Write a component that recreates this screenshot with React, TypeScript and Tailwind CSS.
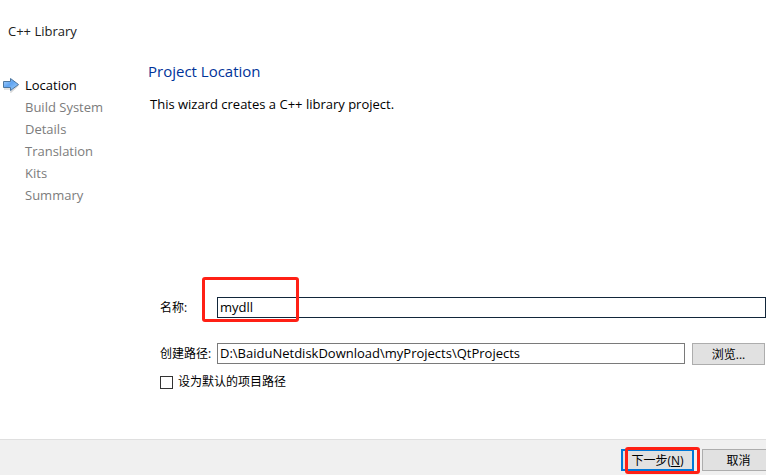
const steps = ["Location", "Build System", "Details", "Translation", "Kits", "Summary"];

function ArrowIcon() {
  return (
    <svg width="18" height="16" viewBox="0 0 18 16" aria-hidden="true">
      <defs>
        <linearGradient id="arrowFill" x1="0" y1="0" x2="1" y2="1">
          <stop offset="0" stopColor="#b5d8fb" />
          <stop offset="0.45" stopColor="#5fa4f2" />
          <stop offset="1" stopColor="#a5d2fb" />
        </linearGradient>
      </defs>
      <path d="M2 12h7v3l7.5-7" fill="none" stroke="#000" strokeOpacity="0.15" strokeWidth="1.5" />
      <path
        d="M1.5 4.5H8.5V1.5L16.5 7.5L8.5 13.5V10.5H1.5Z"
        fill="url(#arrowFill)"
        stroke="#4d769f"
        strokeWidth="1"
        strokeLinejoin="round"
      />
    </svg>
  );
}

export default function App() {
  return (
    <div className="flex min-h-screen flex-col overflow-hidden bg-white font-['Open_Sans','Noto_Sans_CJK_SC',sans-serif] text-[13px] leading-[22px] text-black">
      <header className="px-2 pt-5">
        <h1 className="text-[#202020]">C++ Library</h1>
      </header>

      <div className="flex flex-1 pt-[18px]">
        <nav className="w-[148px] shrink-0 pt-[14px]" aria-label="Steps">
          <ol>
            {steps.map((step, i) => (
              <li key={step} className="flex items-center">
                <span className="flex w-[25px] shrink-0 pl-0.5">{i === 0 && <ArrowIcon />}</span>
                <span className={i === 0 ? "text-black" : "text-[#7c7c7c]"}>{step}</span>
              </li>
            ))}
          </ol>
        </nav>

        <main className="min-w-0 flex-1">
          <h2 className="text-[15px] text-[#003399]">Project Location</h2>
          <p className="px-0.5 pt-[11px]">This wizard creates a C++ library project.</p>

          <form id="location" className="pt-[182px] pl-3 text-[12px]" onSubmit={(e) => e.preventDefault()}>
            <div className="flex items-start">
              <label htmlFor="name" className="w-[57px] shrink-0">名称:</label>
              <div className="relative min-w-0 flex-1">
                <input
                  id="name"
                  defaultValue="mydll"
                  className="block h-[21px] w-full border border-[#12263a] bg-white px-0.5 pb-0.5 text-[13px] leading-[18px] outline-none"
                />
                <span className="pointer-events-none absolute -top-5 -left-[15px] h-[45px] w-[97px] rounded-[3px] border-3 border-[#ff2015]" />
              </div>
            </div>

            <div className="flex items-start pt-6 pr-px">
              <label htmlFor="path" className="w-[57px] shrink-0 whitespace-nowrap">创建路径:</label>
              <input
                id="path"
                defaultValue="D:\BaiduNetdiskDownload\myProjects\QtProjects"
                className="block h-[21px] min-w-0 flex-1 border border-[#7a7a7a] bg-white px-0.5 pb-0.5 text-[13px] leading-[18px] outline-none"
              />
              <button type="button" className="ml-[7px] h-[22px] w-[73px] border border-[#adadad] bg-[#e1e1e1] pt-0.5 leading-[18px]">
                浏览...
              </button>
            </div>

            <label className="flex items-center gap-[5px] pt-[6px]">
              <input type="checkbox" className="size-[13px] appearance-none border border-[#333333] bg-white checked:bg-[#0078d7]" />
              设为默认的项目路径
            </label>
          </form>
        </main>
      </div>

      <footer className="flex h-9 items-start justify-end border-t border-[#dfdfdf] bg-[#f0f0f0] pt-[9px] text-[12px]">
        <div className="relative">
          <button type="submit" form="location" className="block h-[22px] w-[73px] border-2 border-[#0078d7] bg-[#e1e1e1] pt-0.5 leading-4">
            下一步(<u>N</u>)
          </button>
          <span className="pointer-events-none absolute -top-0.5 left-1 h-[27px] w-[75px] rounded-[3px] border-3 border-[#ff2015]" />
        </div>
        <button type="button" className="-mr-[9px] ml-2 h-[22px] w-[73px] border border-[#adadad] bg-[#e1e1e1] pt-0.5 leading-[18px]">
          取消
        </button>
      </footer>
    </div>
  );
}
